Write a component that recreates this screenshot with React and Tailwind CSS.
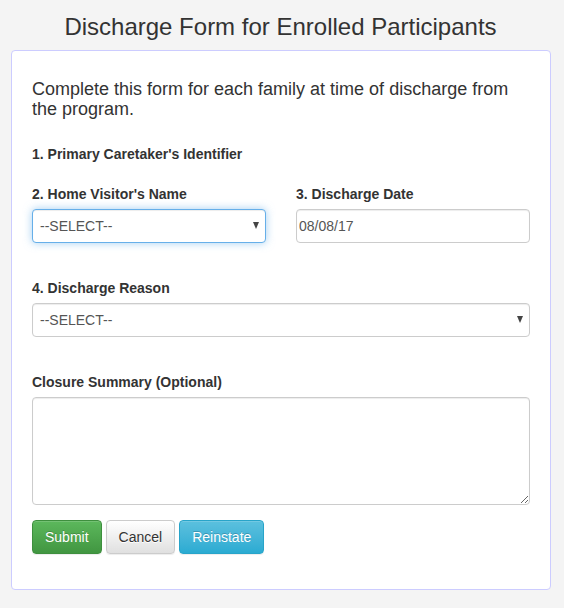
export default function App() {
  const input =
    'block w-full h-[34px] border rounded bg-white text-[14px] text-[#555] outline-none';
  const plain = 'border-[#ccc] shadow-[inset_0_1px_1px_rgba(0,0,0,0.075)]';
  const focus = 'border-[#66afe9] shadow-[inset_0_1px_1px_rgba(0,0,0,0.075),0_0_8px_rgba(102,175,233,0.6)]';
  const btn =
    'h-[34px] px-3 rounded border text-[14px] leading-[20px] shadow-[inset_0_1px_0_rgba(255,255,255,0.15),0_1px_1px_rgba(0,0,0,0.075)]';

  const Select = ({ focused }) => (
    <div className="relative">
      <div className={`${input} ${focused ? focus : plain} pl-[7px] flex items-center`}>--SELECT--</div>
      <span className="absolute right-[7px] top-[13px] w-0 h-0 border-x-[3.5px] border-x-transparent border-t-[7px] border-t-[#444]" />
    </div>
  );

  return (
    <div className="min-h-screen bg-[#f4f4f4] text-[#333] text-[14px] leading-[20px] font-['Liberation_Sans',Arial,sans-serif] pb-[18px]">
      <h1 className="text-center text-[24px] leading-[1.1] pt-[14px] mb-[10px] pr-[3px]">
        Discharge Form for Enrolled Participants
      </h1>

      <div className="ml-[11px] w-[540px] bg-white border border-[#ccf] rounded px-[20px] pt-[29px] pb-[35px]">
        <p className="text-[18px] leading-[1.1] mb-[24px]">
          Complete this form for each family at time of discharge from the program.
        </p>

        <label className="block font-bold mb-[20px]">1. Primary Caretaker's Identifier</label>

        <div className="grid grid-cols-2 gap-x-[30px]">
          <div>
            <label className="block font-bold mb-[5px]">2. Home Visitor's Name</label>
            <Select focused />
          </div>
          <div>
            <label className="block font-bold mb-[5px]">3. Discharge Date</label>
            <input className={`${input} ${plain} pl-[2px]`} defaultValue="08/08/17" readOnly />
          </div>
        </div>

        <label className="block font-bold mt-[35px] mb-[5px]">4. Discharge Reason</label>
        <Select />

        <label className="block font-bold mt-[35px] mb-[5px]">Closure Summary (Optional)</label>
        <textarea rows={5} className={`${input} ${plain} h-[108px] px-3 py-[6px]`} />

        <div className="flex gap-[4px] mt-[15px]">
          <button className={`${btn} text-white bg-linear-to-b from-[#5cb85c] to-[#419641] border-[#3e8f3e] [text-shadow:0_-1px_0_rgba(0,0,0,0.2)]`}>
            Submit
          </button>
          <button className={`${btn} text-[#333] bg-linear-to-b from-white to-[#e0e0e0] border-[#ccc] [text-shadow:0_1px_0_#fff]`}>
            Cancel
          </button>
          <button className={`${btn} text-white bg-linear-to-b from-[#5bc0de] to-[#2aabd2] border-[#28a4c9] [text-shadow:0_-1px_0_rgba(0,0,0,0.2)]`}>
            Reinstate
          </button>
        </div>
      </div>
    </div>
  );
}
